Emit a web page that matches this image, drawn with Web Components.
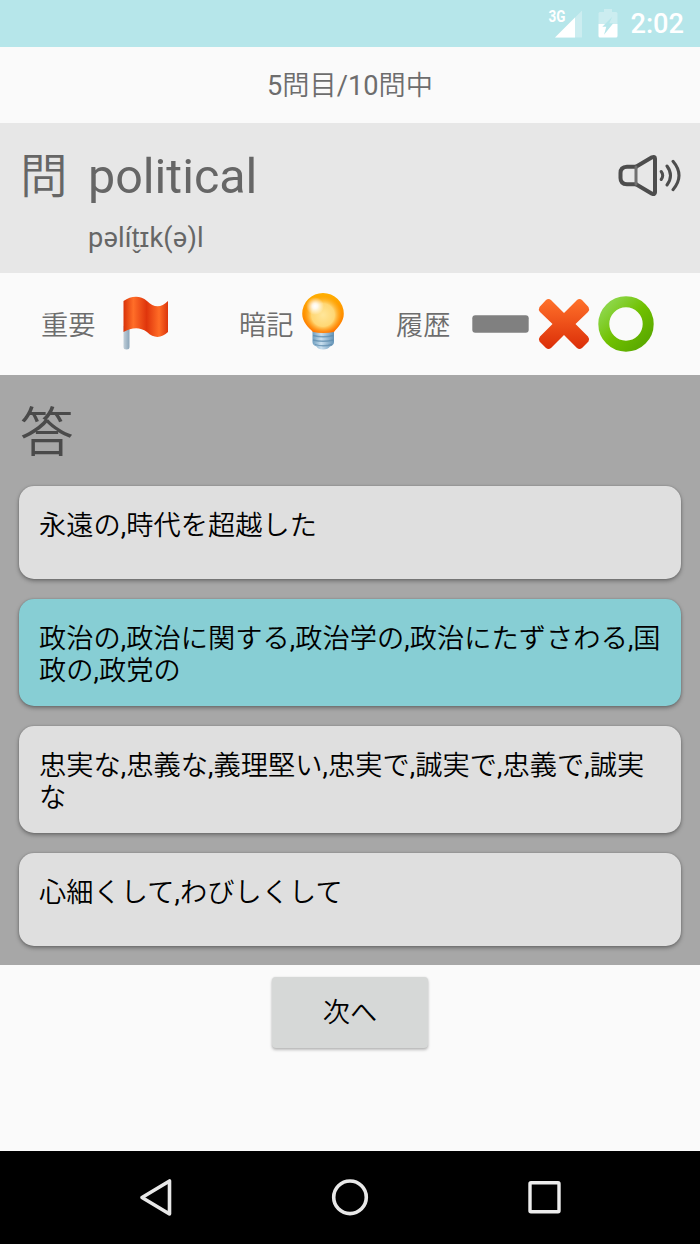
<!DOCTYPE html>
<html lang="ja">
<head>
  <meta charset="UTF-8">
  <title>political</title>
  <style>
    body {
      margin: 0;
      background: #fafafa;
      font-family: Roboto, "Noto Sans CJK JP DemiLight", "Noto Sans CJK JP", sans-serif;
    }
  </style>
</head>
<body>
  <quiz-app></quiz-app>

  <script>
    const icons = {
      signal: /*html*/ `
        <svg width="38" height="42" viewBox="-4 -6 38 42">
          <path d="M7 28.500L34 1.500V28.500Z" fill="#fff" fill-opacity=".3"/>
          <path d="M0 0H18V15H0Z" fill="#b6e6ea"/>
          <path d="M7 28.500L27 8.500V28.500Z" fill="#fff"/>
          <text x=".5" y="13" font-size="16" font-weight="700" textLength="17" lengthAdjust="spacingAndGlyphs" fill="#fff">3G</text>
        </svg>`,
      battery: /*html*/ `
        <svg width="20" height="30" viewBox="0 0 20 30">
          <path d="M2 3H6V0H14V3H18Q19.500 3 19.500 4.500V15H.5V4.500Q.5 3 2 3Z" fill="#fff" fill-opacity=".3"/>
          <path d="M.5 15H19.500V27Q19.500 28.500 18 28.500H2Q.5 28.500 .5 27Z" fill="#fff"/>
          <path d="M14.300 7.700L4.300 17.700H8.300L6 25.700L15.300 14.300H11.300Z" fill="#b6e6ea"/>
        </svg>`,
      speaker: /*html*/ `
        <svg width="64" height="44" viewBox="0 0 64 44" fill="none" stroke="#4d4d4d" stroke-width="4" stroke-linejoin="round" stroke-linecap="round">
          <path d="M18 12.700H9Q2.500 13 2.500 19V24Q2.500 30 9 30.300H18"/>
          <path d="M18 12.700L34 3.300Q37 2 37 4.800V38.200Q37 41 34 39.700L18 30.300"/>
          <path d="M18 13V30" stroke="#707070" stroke-width="3"/>
          <path d="M43.200 17.500Q46.200 21.500 43.200 25.500M49 12Q56 21.500 49 31M55 7.300Q67 21.500 55 35.700" stroke-width="3"/>
        </svg>`,
      flag: /*html*/ `
        <svg width="48" height="54" viewBox="0 0 48 54">
          <defs>
            <linearGradient id="cloth">
              <stop offset="0" stop-color="#d93208"/>
              <stop offset=".22" stop-color="#ff6e28"/>
              <stop offset=".52" stop-color="#df350c"/>
              <stop offset=".8" stop-color="#ff6c26"/>
              <stop offset="1" stop-color="#dc350b"/>
            </linearGradient>
            <linearGradient id="pole">
              <stop offset="0" stop-color="#c1cfd9"/>
              <stop offset="1" stop-color="#8ba5b9"/>
            </linearGradient>
          </defs>
          <path d="M1.500 30H7.500V51Q7.500 53.500 4.500 53.500T1.500 51Z" fill="url(#pole)"/>
          <path d="M1.500 5C9 0 18 -1 25 5C32 12 39 12 46 5V36C40 42 32 43 25 36C17 30 9 32 1.500 36Z" fill="url(#cloth)"/>
        </svg>`,
      bulb: /*html*/ `
        <svg width="44" height="58" viewBox="0 0 44 58">
          <defs>
            <linearGradient id="rim" x1="0" y1="0" x2="0" y2="1">
              <stop offset="0" stop-color="#ffb000"/>
              <stop offset="1" stop-color="#ff7300"/>
            </linearGradient>
            <radialGradient id="glass" cx=".5" cy=".5" r=".5">
              <stop offset="0" stop-color="#ffe69a"/>
              <stop offset=".6" stop-color="#ffd774"/>
              <stop offset="1" stop-color="#ffb52c" stop-opacity="0"/>
            </radialGradient>
            <radialGradient id="shine">
              <stop offset="0" stop-color="#fff"/>
              <stop offset=".3" stop-color="#fff" stop-opacity=".85"/>
              <stop offset="1" stop-color="#fff" stop-opacity="0"/>
            </radialGradient>
            <linearGradient id="screw">
              <stop offset="0" stop-color="#6f9fc0"/>
              <stop offset=".4" stop-color="#c9dfee"/>
              <stop offset="1" stop-color="#6393b7"/>
            </linearGradient>
          </defs>
          <path d="M11.500 39H33V50Q33 53 29 54.500Q27 57.500 22 57.500T15.500 54.500Q11.500 53 11.500 50Z" fill="url(#screw)"/>
          <path d="M12 43.500Q22 46 32.500 43.500M12 48Q22 50.500 32.500 48M14 52.500Q22 55 31 52.500" fill="none" stroke="#5e8cae" stroke-opacity=".75" stroke-width="1.300"/>
          <path d="M22 1A20.800 20.800 0 0 1 42.800 21.800C42.800 30 37 35 33 40Q22 42 12 40C7 35 1.200 30 1.200 21.800A20.800 20.800 0 0 1 22 1Z" fill="url(#rim)"/>
          <ellipse cx="22" cy="23" rx="19" ry="19" fill="url(#glass)"/>
          <circle cx="14" cy="14" r="9" fill="url(#shine)"/>
        </svg>`,
      none: /*html*/ `
        <svg width="57" height="18" viewBox="0 0 57 18">
          <rect x=".3" y=".3" width="56.400" height="17.400" rx="3" fill="#808080"/>
        </svg>`,
      wrong: /*html*/ `
        <svg width="52" height="52" viewBox="0 0 52 52">
          <defs>
            <linearGradient id="cross" x1="0" y1="0" x2="0" y2="1">
              <stop offset="0" stop-color="#ff712a"/>
              <stop offset="1" stop-color="#db2e08"/>
            </linearGradient>
          </defs>
          <path d="M1.500 9L8 2Q10.500 0 13 2L26 15L39 2Q41.500 0 44 2L50.500 9Q52 11.500 50 14L37.500 26L50 38.500Q52 41 50.500 43.500L44 50Q41.500 52 39 50L26 37L13 50Q10.500 52 8 50L1.500 43.500Q0 41 2 38.500L14.500 26L2 14Q0 11.500 1.500 9Z" fill="url(#cross)"/>
        </svg>`,
      right: /*html*/ `
        <svg width="56" height="56" viewBox="0 0 56 56">
          <defs>
            <linearGradient id="ring" x1="0" y1="0" x2="1" y2="1">
              <stop offset=".1" stop-color="#8bd544"/>
              <stop offset=".5" stop-color="#70c000"/>
              <stop offset=".9" stop-color="#5cab00"/>
            </linearGradient>
          </defs>
          <circle cx="28" cy="28" r="22.200" fill="none" stroke="url(#ring)" stroke-width="11"/>
        </svg>`,
      back: /*html*/ `
        <svg width="36" height="40" viewBox="0 0 36 40">
          <path d="M4 20.500L31.500 4V37Z" fill="none" stroke="#e8e8e8" stroke-width="3.600" stroke-linejoin="round"/>
        </svg>`,
      home: /*html*/ `
        <svg width="40" height="40" viewBox="0 0 40 40">
          <circle cx="20" cy="20.300" r="16.300" fill="none" stroke="#e8e8e8" stroke-width="3.600"/>
        </svg>`,
      recent: /*html*/ `
        <svg width="36" height="36" viewBox="0 0 36 36">
          <rect x="3" y="3.700" width="29" height="29" rx="1" fill="none" stroke="#ededed" stroke-width="3.400"/>
        </svg>`
    };

    class QuizIcon extends HTMLElement {
      constructor() {
        super();
        this.attachShadow({ mode: 'open' });
      }

      static get styles() {
        return /*css*/ `
          :host { display: block; flex: none; }
          svg { display: block; }
        `;
      }

      connectedCallback() {
        this.shadowRoot.innerHTML = /*html*/ `
          <style>${QuizIcon.styles}</style>
          ${icons[this.getAttribute('name')]}
        `;
      }
    }
    customElements.define('quiz-icon', QuizIcon);

    class StatusBar extends HTMLElement {
      constructor() {
        super();
        this.attachShadow({ mode: 'open' });
      }

      static get styles() {
        return /*css*/ `
          :host {
            display: flex;
            justify-content: flex-end;
            align-items: center;
            box-sizing: border-box;
            height: 47px;
            padding-right: 16px;
            background: #b6e6ea;
            color: #fff;
            font-size: 27.200px;
            font-weight: 500;
            line-height: 47px;
          }
          .battery { margin: 0 12px 0 16px; }
          .time { padding-top: 2px; }
        `;
      }

      connectedCallback() {
        this.shadowRoot.innerHTML = /*html*/ `
          <style>${StatusBar.styles}</style>
          <quiz-icon name="signal"></quiz-icon>
          <quiz-icon class="battery" name="battery"></quiz-icon>
          <span class="time"><slot></slot></span>
        `;
      }
    }
    customElements.define('status-bar', StatusBar);

    class QuizQuestion extends HTMLElement {
      constructor() {
        super();
        this.attachShadow({ mode: 'open' });
      }

      static get styles() {
        return /*css*/ `
          :host {
            display: grid;
            grid-template-columns: 68px 1fr 64px;
            grid-template-rows: 64px 58px;
            box-sizing: border-box;
            height: 150px;
            padding: 21px 18px 0 20px;
            background: #e7e7e7;
            color: #666;
          }
          .mark { font-size: 47.600px; line-height: 67px; }
          .word { font-size: 48.400px; line-height: 66px; }
          .phonetic {
            grid-column: 2;
            font-size: 27.200px;
            letter-spacing: .2px;
            line-height: 60px;
          }
          .sound { margin-top: 10px; }
        `;
      }

      connectedCallback() {
        this.shadowRoot.innerHTML = /*html*/ `
          <style>${QuizQuestion.styles}</style>
          <div class="mark">問</div>
          <div class="word"><slot></slot></div>
          <quiz-icon class="sound" name="speaker"></quiz-icon>
          <div class="phonetic"><slot name="phonetic"></slot></div>
        `;
      }
    }
    customElements.define('quiz-question', QuizQuestion);

    class QuizTools extends HTMLElement {
      constructor() {
        super();
        this.attachShadow({ mode: 'open' });
      }

      static get styles() {
        return /*css*/ `
          :host {
            display: flex;
            align-items: center;
            box-sizing: border-box;
            height: 102px;
            padding-left: 41px;
            color: #6d6d6d;
            font-size: 27.200px;
            line-height: 32px;
          }
          span { width: 55px; padding-top: 3px; }
          .flag { margin: -3px 69px 0 26px; }
          .bulb { margin: -7px 51px 0 7px; }
          .none { margin-left: 21px; }
          .wrong { margin-left: 9px; }
          .right { margin-left: 8px; }
        `;
      }

      connectedCallback() {
        this.shadowRoot.innerHTML = /*html*/ `
          <style>${QuizTools.styles}</style>
          <span>重要</span>
          <quiz-icon class="flag" name="flag"></quiz-icon>
          <span>暗記</span>
          <quiz-icon class="bulb" name="bulb"></quiz-icon>
          <span>履歴</span>
          <quiz-icon class="none" name="none"></quiz-icon>
          <quiz-icon class="wrong" name="wrong"></quiz-icon>
          <quiz-icon class="right" name="right"></quiz-icon>
        `;
      }
    }
    customElements.define('quiz-tools', QuizTools);

    class QuizOption extends HTMLElement {
      constructor() {
        super();
        this.attachShadow({ mode: 'open' });
      }

      static get styles() {
        return /*css*/ `
          :host {
            display: block;
            box-sizing: border-box;
            min-height: 93px;
            padding: 24px 19px 20px 20px;
            border-radius: 15px;
            background: #dfdfdf;
            box-shadow: 0 2px 4px rgba(0, 0, 0, .35), 0 0 2px rgba(0, 0, 0, .2);
            color: #000;
            font-size: 27.200px;
            letter-spacing: .08px;
            line-height: 32px;
            word-break: break-all;
            line-break: anywhere;
          }
          :host([selected]) { background: #87ced4; }
        `;
      }

      connectedCallback() {
        this.shadowRoot.innerHTML = /*html*/ `
          <style>${QuizOption.styles}</style>
          <slot></slot>
        `;
      }
    }
    customElements.define('quiz-option', QuizOption);

    class QuizAnswers extends HTMLElement {
      constructor() {
        super();
        this.attachShadow({ mode: 'open' });
      }

      static get styles() {
        return /*css*/ `
          :host {
            display: flex;
            flex-direction: column;
            gap: 20px;
            box-sizing: border-box;
            height: 590px;
            padding: 20px 19px 19px;
            background: #a7a7a7;
          }
          .mark {
            height: 71px;
            padding-left: 1px;
            color: #4a4a4a;
            font-size: 53.600px;
            line-height: 77px;
          }
        `;
      }

      connectedCallback() {
        this.shadowRoot.innerHTML = /*html*/ `
          <style>${QuizAnswers.styles}</style>
          <div class="mark">答</div>
          <slot></slot>
        `;
      }
    }
    customElements.define('quiz-answers', QuizAnswers);

    class QuizButton extends HTMLElement {
      constructor() {
        super();
        this.attachShadow({ mode: 'open' });
      }

      static get styles() {
        return /*css*/ `
          :host { display: block; }
          button {
            display: block;
            width: 156px;
            height: 71px;
            padding: 2px 0 0;
            border: 0;
            border-radius: 4px;
            background: #d6d8d7;
            box-shadow: 0 2px 3px rgba(0, 0, 0, .25), 0 0 2px rgba(0, 0, 0, .1);
            color: #000;
            font: inherit;
            font-size: 27.200px;
            line-height: 69px;
          }
        `;
      }

      connectedCallback() {
        this.shadowRoot.innerHTML = /*html*/ `
          <style>${QuizButton.styles}</style>
          <button><slot></slot></button>
        `;
      }
    }
    customElements.define('quiz-button', QuizButton);

    class NavBar extends HTMLElement {
      constructor() {
        super();
        this.attachShadow({ mode: 'open' });
      }

      static get styles() {
        return /*css*/ `
          :host {
            display: grid;
            grid-template-columns: repeat(3, 194.500px);
            justify-content: center;
            justify-items: center;
            align-items: center;
            box-sizing: border-box;
            height: 93px;
            padding-bottom: 1px;
            background: #000;
          }
        `;
      }

      connectedCallback() {
        this.shadowRoot.innerHTML = /*html*/ `
          <style>${NavBar.styles}</style>
          <quiz-icon name="back"></quiz-icon>
          <quiz-icon name="home"></quiz-icon>
          <quiz-icon name="recent"></quiz-icon>
        `;
      }
    }
    customElements.define('nav-bar', NavBar);

    class QuizApp extends HTMLElement {
      constructor() {
        super();
        this.attachShadow({ mode: 'open' });
      }

      static get styles() {
        return /*css*/ `
          :host {
            display: flex;
            flex-direction: column;
            height: 1244px;
          }
          .progress {
            height: 76px;
            color: #6d6d6d;
            font-size: 27.200px;
            line-height: 78px;
            text-align: center;
          }
          .next {
            display: flex;
            flex: 1;
            justify-content: center;
            padding-top: 12px;
          }
        `;
      }

      connectedCallback() {
        this.shadowRoot.innerHTML = /*html*/ `
          <style>${QuizApp.styles}</style>
          <status-bar>2:02</status-bar>
          <div class="progress">5問目/10問中</div>
          <quiz-question>political<span slot="phonetic">pəlít̬ɪk(ə)l</span></quiz-question>
          <quiz-tools></quiz-tools>
          <quiz-answers>
            <quiz-option>永遠の,時代を超越した</quiz-option>
            <quiz-option selected>政治の,政治に関する,政治学の,政治にたずさわる,国政の,政党の</quiz-option>
            <quiz-option>忠実な,忠義な,義理堅い,忠実で,誠実で,忠義で,誠実な</quiz-option>
            <quiz-option>心細くして,わびしくして</quiz-option>
          </quiz-answers>
          <div class="next"><quiz-button>次へ</quiz-button></div>
          <nav-bar></nav-bar>
        `;
      }
    }
    customElements.define('quiz-app', QuizApp);
  </script>
</body>
</html>
